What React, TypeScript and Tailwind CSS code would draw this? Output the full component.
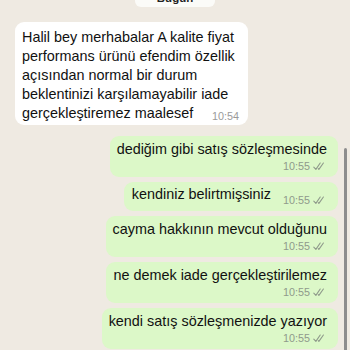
const INCOMING = [
  'Halil bey merhabalar A kalite fiyat',
  'performans ürünü efendim özellik',
  'açısından normal bir durum',
  'beklentinizi karşılamayabilir iade',
];

const OUTGOING = [
  { text: 'dediğim gibi satış sözleşmesinde', inline: false },
  { text: 'kendiniz belirtmişsiniz', inline: true },
  { text: 'cayma hakkının mevcut olduğunu', inline: false },
  { text: 'ne demek iade gerçekleştirilemez', inline: false },
  { text: 'kendi satış sözleşmenizde yazıyor', inline: false },
];

function DoubleCheck() {
  return (
    <svg width="12" height="9" viewBox="0 0 12 9" fill="none" className="shrink-0">
      <path d="M0.8 5.2 L2.9 7.4 L7.2 1" stroke="#8f9a8b" strokeWidth="1.1" strokeLinecap="round" strokeLinejoin="round" />
      <path d="M5.3 6.6 L5.9 7.4 L10.4 1" stroke="#8f9a8b" strokeWidth="1.1" strokeLinecap="round" strokeLinejoin="round" />
    </svg>
  );
}

function Stamp() {
  return (
    <span className="flex items-center gap-[3px] text-[10.8px] leading-[14px] text-[#8f9a8b]">
      10:55
      <DoubleCheck />
    </span>
  );
}

function OutBubble({ text, inline }: { text: string; inline: boolean }) {
  if (inline) {
    return (
      <div className="flex items-end gap-[12px] rounded-[9px] bg-[#dcf8c8] pl-[8px] pr-[13px] pt-[3px] pb-[7px]">
        <span className="leading-[19px]">{text}</span>
        <span className="mb-[-3px]">
          <Stamp />
        </span>
      </div>
    );
  }
  return (
    <div className="flex flex-col items-end rounded-[9px] bg-[#dcf8c8] pl-[7px] pr-[11px] pt-[4px] pb-[4px]">
      <span className="leading-[19px]">{text}</span>
      <span className="pr-[2px]">
        <Stamp />
      </span>
    </div>
  );
}

export default function App() {
  return (
    <div
      className="relative h-[350px] w-[350px] overflow-hidden bg-[#efeae2] text-[14.4px] text-[#111111]"
      style={{ fontFamily: '"Liberation Sans", Arial, sans-serif' }}
    >
      <div className="flex flex-col">
        <div className="mt-[-11px] flex justify-center">
          <div className="h-[18px] w-[80px] rounded-[6px] bg-[#fbfbf8] text-center text-[11.5px] font-bold leading-[18px] text-[#222]">
            Bugün
          </div>
        </div>

        <div className="ml-[15px] mt-[15px] w-[233px] rounded-[9px] bg-white pl-[7px] pr-[9px] pt-[6px] pb-[2px]">
          {INCOMING.map((line) => (
            <div key={line} className="whitespace-nowrap leading-[19px]">
              {line}
            </div>
          ))}
          <div className="flex items-center justify-between leading-[19px]">
            <span>gerçekleştiremez maalesef</span>
            <span className="mt-[4px] text-[10.8px] leading-[14px] text-[#9a9a9a]">10:54</span>
          </div>
        </div>

        <div className="mt-[11px] mr-[12px] flex flex-col items-end gap-[5px]">
          {OUTGOING.map((m) => (
            <OutBubble key={m.text} text={m.text} inline={m.inline} />
          ))}
        </div>
      </div>

      <div className="absolute right-[3px] top-[148px] h-[220px] w-[3px] rounded-full bg-[#8d8d8d]" />
    </div>
  );
}
